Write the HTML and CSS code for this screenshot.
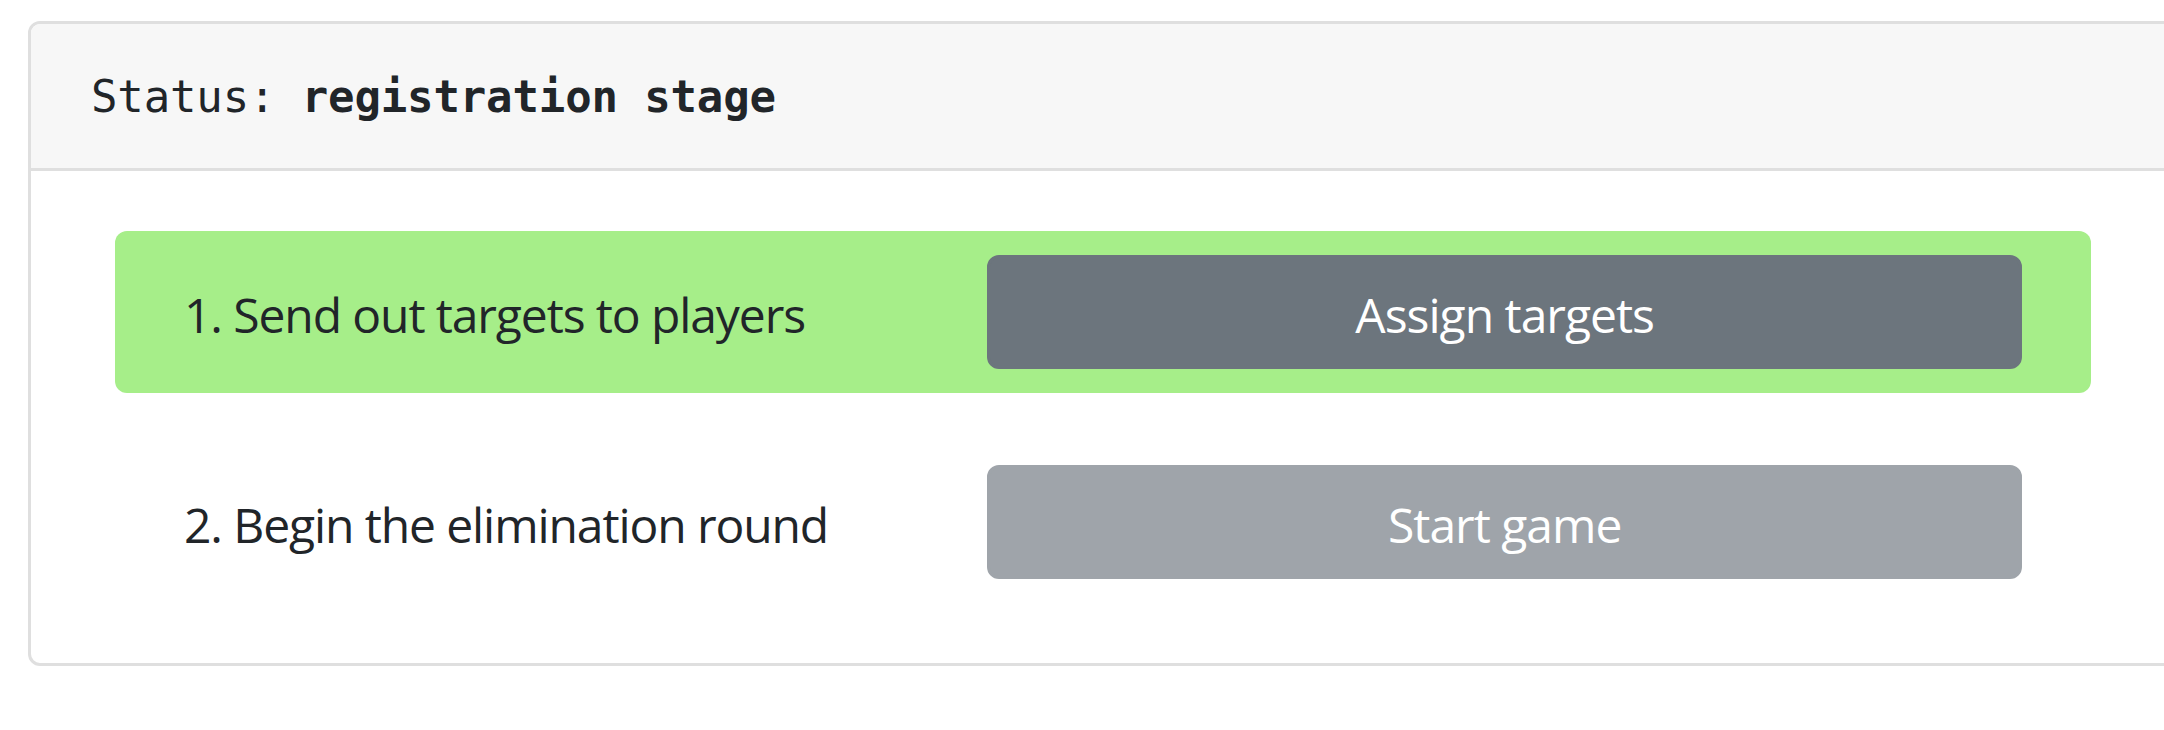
FILE: index.html
```html
<!DOCTYPE html>
<html lang="en">
<head>
<meta charset="utf-8">
<title>Game status</title>
<link rel="stylesheet" href="styles.css">
</head>
<body>
<div class="page">
  <div class="card">
    <div class="card-header">
      <code class="status">Status: <strong>registration stage</strong></code>
    </div>
    <div class="card-body">
      <div class="step step-active">
        <div class="step-label">1. Send out targets to players</div>
        <div class="step-action"><button class="btn btn-secondary" type="button">Assign targets</button></div>
      </div>
      <div class="step">
        <div class="step-label">2. Begin the elimination round</div>
        <div class="step-action"><button class="btn btn-secondary" type="button" disabled>Start game</button></div>
      </div>
    </div>
  </div>
</div>
</body>
</html>
```

FILE: styles.css
```css
html, body {
  margin: 0;
  padding: 0;
  background: #ffffff;
  overflow: hidden;
}

body {
  font-family: "Open Sans", "Noto Sans", sans-serif;
  font-size: 48px;
  line-height: 72px;
  letter-spacing: -1.1px;
  color: #212529;
}

.page {
  padding: 21px 0 0 28px;
}

.card {
  box-sizing: border-box;
  width: 2150px;
  border: 3px solid #dfdfdf;
  border-radius: 12px;
  background: #ffffff;
}

.card-header {
  background: #f7f7f7;
  padding: 37px 60px 35px;
  height: 72px;
  border-bottom: 3px solid #dfdfdf;
  border-radius: 9px 9px 0 0;
  font-family: "DejaVu Sans Mono", "Liberation Mono", monospace;
  font-size: 44px;
  line-height: 72px;
  letter-spacing: -0.15px;
}

.status {
  display: block;
  font-family: inherit;
  font-size: inherit;
  line-height: inherit;
  color: #212529;
}

.status strong {
  font-weight: bold;
}

.card-body {
  padding: 60px;
}

.step {
  display: grid;
  grid-template-columns: 5fr 7fr;
  align-items: center;
  padding: 24px;
  margin: 0 24px 48px;
  border-radius: 12px;
}

.step:last-child {
  margin-bottom: 0;
}

.step-active {
  background: #a6ee89;
}

.step-label,
.step-action {
  padding: 0 45px;
}

.step-label {
  padding-top: 6px;
}

.btn {
  display: block;
  box-sizing: border-box;
  width: 100%;
  height: 114px;
  padding: 21px 36px 15px;
  font-family: inherit;
  font-size: 48px;
  line-height: 72px;
  letter-spacing: -1px;
  color: #ffffff;
  text-align: center;
  border: 3px solid transparent;
  border-radius: 12px;
  cursor: pointer;
}

.btn-secondary {
  background: #6c757d;
  border-color: #6c757d;
}

.btn:disabled {
  opacity: 0.65;
  cursor: default;
}
```
